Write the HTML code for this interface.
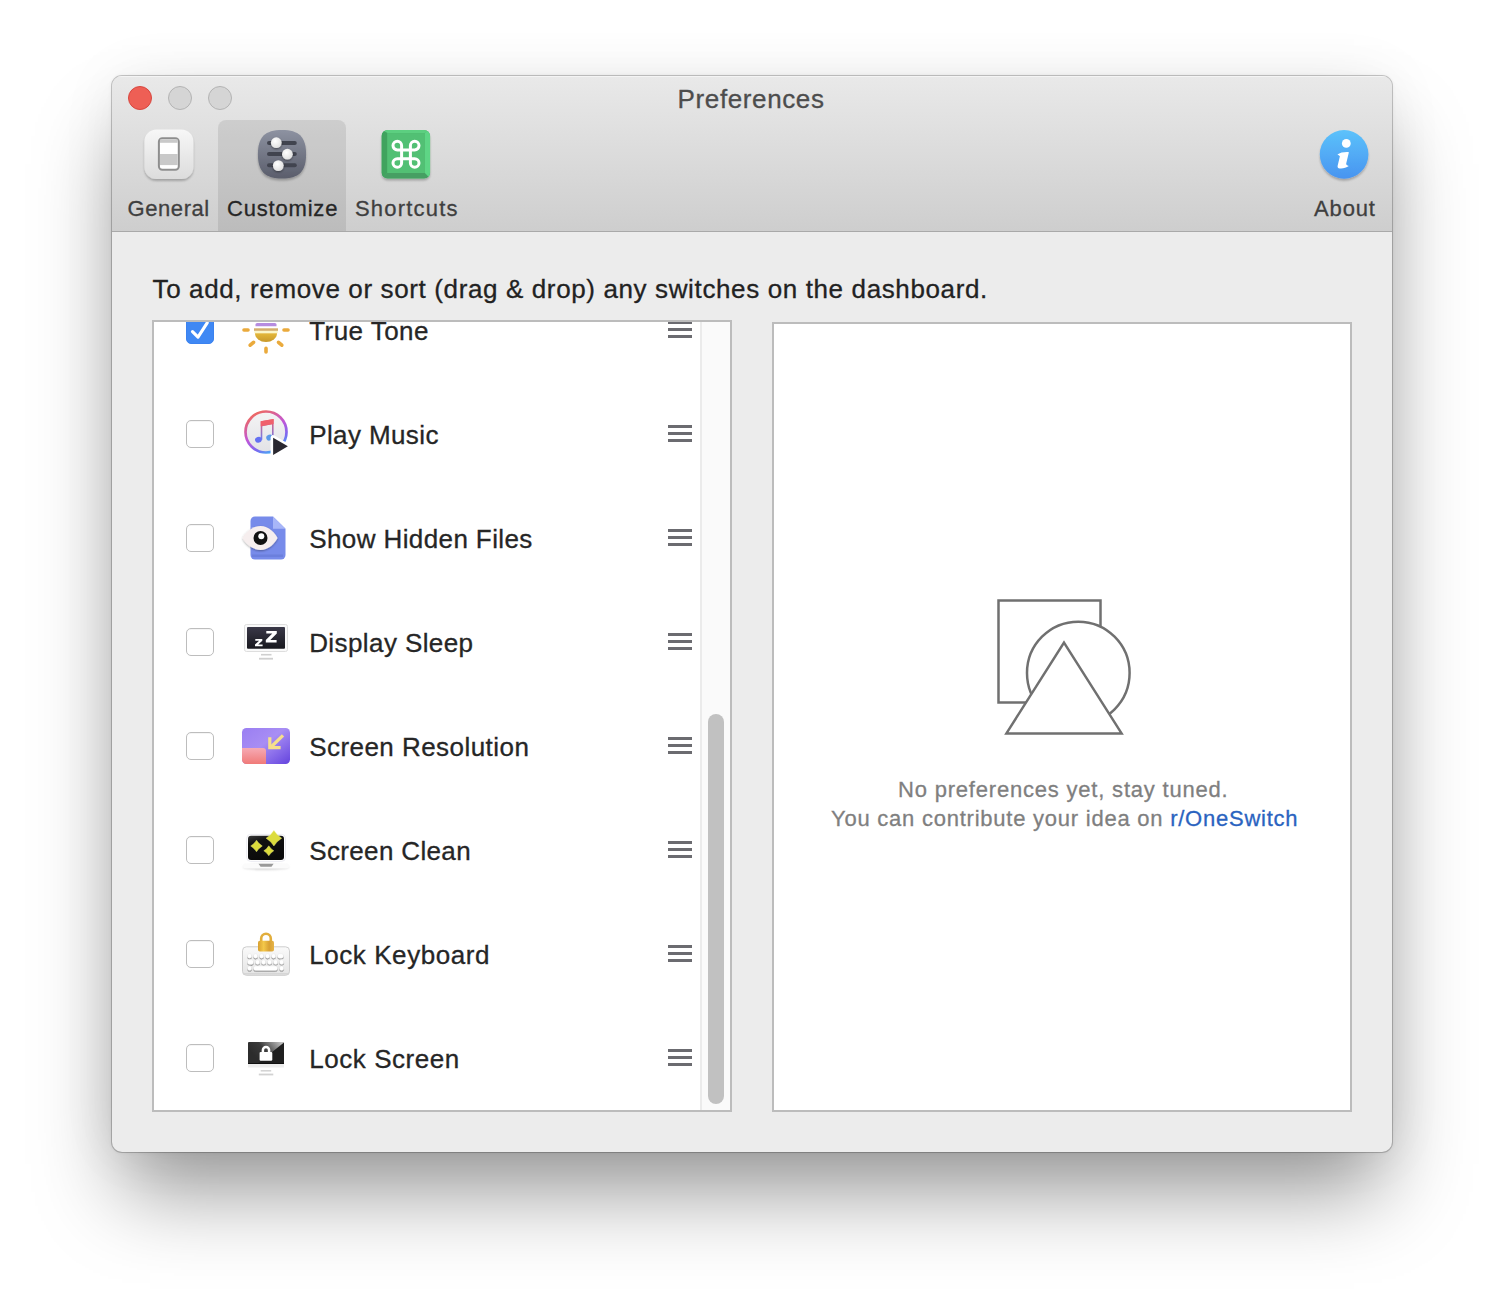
<!DOCTYPE html>
<html><head><meta charset="utf-8">
<style>
*{box-sizing:border-box;margin:0;padding:0}
html,body{width:1504px;height:1300px;background:#fff;overflow:hidden;font-family:"Liberation Sans",sans-serif}
.txt,.tlab,.lab{-webkit-text-stroke:0.3px currentColor}
.abs{position:absolute}
#win{position:absolute;left:112px;top:76px;width:1280px;height:1076px;border-radius:10px;background:#ececec;
 box-shadow:0 0 0 1px rgba(0,0,0,0.2),0 0 4px rgba(0,0,0,0.08),0 0 60px rgba(0,0,0,0.06),0 50px 80px -10px rgba(0,0,0,0.40);overflow:hidden}
#tb{position:absolute;left:0;top:0;width:1280px;height:156px;background:linear-gradient(#e9e9e9,#cecece);border-bottom:1px solid #a9a9a9;box-shadow:inset 0 1px 0 rgba(255,255,255,0.5)}
.tl{position:absolute;width:24px;height:24px;border-radius:50%;top:10px}
.txt{position:absolute;white-space:nowrap}
.tlab{position:absolute;font-size:22px;line-height:22px;color:#3f3f3f;white-space:nowrap}
.row{position:absolute;left:0;width:546px;height:104px}
.cb{position:absolute;left:32px;top:38px;width:28px;height:28px;border-radius:5px;border:1px solid #bdbdbd;background:#fff;box-shadow:inset 0 1px 0 rgba(0,0,0,0.04)}
.lab{position:absolute;left:155.2px;top:0;font-size:26px;line-height:26px;color:#262626;white-space:nowrap}
.ico{position:absolute;left:84px;top:24px;width:56px;height:56px}
.hd{position:absolute;left:514px;top:50px;width:24px;height:3px;background:#6b6b70;box-shadow:0 -7px 0 #6b6b70,0 7px 0 #6b6b70}
</style></head><body>
<div id="win">
 <div id="tb">
  <div class="tl" style="left:16px;background:#ee5f55;border:1px solid #d7473f"></div>
  <div class="tl" style="left:56px;background:#d5d5d5;border:1px solid #b3b3b3"></div>
  <div class="tl" style="left:96px;background:#d5d5d5;border:1px solid #b3b3b3"></div>
  <div class="abs" style="left:106px;top:44px;width:128px;height:111px;background:rgba(0,0,0,0.085);border-radius:8px 8px 0 0"></div>
 </div>
</div>
<!-- toolbar icons -->
<svg class="abs" style="left:120px;top:115px" width="1280" height="80" viewBox="120 115 1280 80">
<defs>
 <linearGradient id="tgen" x1="0" y1="0" x2="0" y2="1"><stop offset="0" stop-color="#f7f7f7"/><stop offset="1" stop-color="#dcdcdc"/></linearGradient>
 <linearGradient id="tcus" x1="0" y1="0" x2="0" y2="1"><stop offset="0" stop-color="#8d92a1"/><stop offset="1" stop-color="#5a5d6b"/></linearGradient>
 <linearGradient id="tabt" x1="0" y1="0" x2="0" y2="1"><stop offset="0" stop-color="#5cc2fb"/><stop offset="1" stop-color="#4894f0"/></linearGradient>
 <radialGradient id="tknob" cx="0.4" cy="0.35" r="0.7"><stop offset="0" stop-color="#ffffff"/><stop offset="1" stop-color="#dedede"/></radialGradient>
 <filter id="tsh" x="-30%" y="-30%" width="160%" height="170%"><feGaussianBlur in="SourceAlpha" stdDeviation="1.3"/><feOffset dy="1.5"/><feComponentTransfer><feFuncA type="linear" slope="0.25"/></feComponentTransfer><feMerge><feMergeNode/><feMergeNode in="SourceGraphic"/></feMerge></filter>
 <filter id="ksh" x="-50%" y="-50%" width="200%" height="200%"><feGaussianBlur in="SourceAlpha" stdDeviation="0.8"/><feOffset dy="0.8"/><feComponentTransfer><feFuncA type="linear" slope="0.45"/></feComponentTransfer><feMerge><feMergeNode/><feMergeNode in="SourceGraphic"/></feMerge></filter>
</defs>
<!-- General -->
<rect x="144.4" y="129.6" width="49" height="49.5" rx="12" fill="url(#tgen)" filter="url(#tsh)"/>
<rect x="158.9" y="138.3" width="19.9" height="31.4" rx="3.5" fill="#fff" stroke="#8e8e8e" stroke-width="2"/>
<rect x="160" y="139.3" width="17.7" height="3.5" fill="#c9c9c9"/>
<rect x="160" y="154" width="17.7" height="11.1" fill="#c9c9c9"/>
<!-- Customize -->
<path d="M282 130.1 C299 130.1 306.1 137 306.1 154.35 C306.1 171.7 299 178.6 282 178.6 C265 178.6 257.9 171.7 257.9 154.35 C257.9 137 265 130.1 282 130.1 Z" fill="url(#tcus)" filter="url(#tsh)"/>
<g stroke="#41444f" stroke-width="4" stroke-linecap="round">
 <line x1="269" y1="142.9" x2="294.8" y2="142.9"/><line x1="269" y1="154" x2="294.8" y2="154"/><line x1="269" y1="165.3" x2="294.8" y2="165.3"/>
</g>
<g fill="url(#tknob)" filter="url(#ksh)">
 <circle cx="276.3" cy="142.7" r="5.4"/><circle cx="287.4" cy="154.2" r="5.4"/><circle cx="278.3" cy="165.6" r="5.4"/>
</g>
<!-- Shortcuts -->
<clipPath id="csc"><rect x="381.6" y="129.9" width="48.5" height="48.7" rx="6"/></clipPath>
<g filter="url(#tsh)">
<rect x="381.6" y="129.9" width="48.5" height="48.7" rx="6" fill="#4db36b"/>
</g>
<g clip-path="url(#csc)">
<path d="M381.6 129.9 H430.1 L424.7 133.1 H387.3 Z" fill="#5ccf80"/>
<path d="M430.1 129.9 V178.6 L424.7 173 V133.1 Z" fill="#5ed585"/>
<path d="M381.6 129.9 L387.3 133.1 V173 L381.6 178.6 Z" fill="#40a35e"/>
<path d="M387.3 173 H424.7 L430.1 178.6 H381.6 Z" fill="#469f63"/>
<rect x="387.3" y="133.1" width="37.4" height="39.9" fill="#52c074"/>
</g>
<path d="M401.60 145.60 A4.3 4.3 0 1 0 397.30 149.90 L414.70 149.90 A4.3 4.3 0 1 0 410.40 145.60 L410.40 163.00 A4.3 4.3 0 1 0 414.70 158.70 L397.30 158.70 A4.3 4.3 0 1 0 401.60 163.00 Z" fill="none" stroke="#fff" stroke-width="3"/>
<!-- About -->
<circle cx="1344.1" cy="154.4" r="24.3" fill="url(#tabt)" filter="url(#tsh)"/>
<circle cx="1346.3" cy="143.4" r="4.4" fill="#fff"/>
<path d="M1337.4 154.6 C1340 152.6 1345 151.8 1348.9 152.2 L1346.2 163.5 C1346 164.8 1347 165.5 1348.8 166 C1346 168.3 1341.5 168.8 1338.6 168.2 C1337.6 167.7 1337.4 166.8 1337.7 165.6 L1339.9 156.3 C1339.2 155.4 1338.3 155 1337.4 154.6 Z" fill="#fff"/>
</svg>
<!-- title -->
<div class="txt" style="left:677.6px;top:86px;font-size:26px;line-height:26px;color:#4d4d4d;letter-spacing:0.61px">Preferences</div>
<!-- toolbar labels -->
<div class="tlab" style="left:127.5px;top:198px;letter-spacing:0.58px">General</div>
<div class="tlab" style="left:227px;top:198px;color:#262626;letter-spacing:0.81px">Customize</div>
<div class="tlab" style="left:355px;top:198px;letter-spacing:1.19px">Shortcuts</div>
<div class="tlab" style="left:1314px;top:198px;letter-spacing:0.87px">About</div>

<!-- description -->
<div class="txt" style="left:152.5px;top:275.7px;font-size:26px;line-height:26px;color:#222;letter-spacing:0.627px">To add, remove or sort (drag &amp; drop) any switches on the dashboard.</div>

<!-- list box -->
<div class="abs" style="left:152px;top:320px;width:580px;height:792px;background:#fff;border:2px solid #bcbcbc"></div>
<div class="abs" id="list" style="left:154px;top:322px;width:576px;height:788px;overflow:hidden">
<div class="row" style="top:-44px"><div class="cb" style="background:#3f88f4;border-color:#3b82ef"><svg width="28" height="28" viewBox="0 0 28 28" style="position:absolute;left:-1px;top:-1px"><path d="M6.5 15.6 L12 21.2 L21.2 6.8" stroke="#fff" stroke-width="3.1" fill="none" stroke-linecap="round" stroke-linejoin="round"/></svg></div><svg class="ico" viewBox="0 0 56 56">
<defs><linearGradient id="gsun" x1="0" y1="0" x2="0" y2="1"><stop offset="0" stop-color="#e4b83a"/><stop offset="1" stop-color="#c8982a"/></linearGradient></defs>
<path d="M17.5 24.2 V22.6 a1.6 1.6 0 0 1 1.6 -1.6 H36.9 a1.6 1.6 0 0 1 1.6 1.6 V24.2 Z" fill="#b68ce0"/>
<rect x="16" y="26.3" width="24" height="2.6" fill="#d4ae6c"/>
<rect x="16.3" y="28.9" width="23.4" height="2.3" fill="#fbf6c8"/>
<path d="M17 31.3 H39 A11 8.8 0 0 1 17 31.3 Z" fill="url(#gsun)"/>
<g stroke="#eaaa3c" stroke-width="3.6" stroke-linecap="round">
<line x1="6" y1="28" x2="10" y2="28"/><line x1="46" y1="28" x2="50" y2="28"/>
<line x1="12.2" y1="43.2" x2="15.5" y2="40.3"/><line x1="40.5" y1="40.3" x2="43.8" y2="43.2"/>
<line x1="28" y1="46.4" x2="28" y2="50"/>
</g></svg><div class="lab" style="top:40px;letter-spacing:0.45px">True Tone</div><div class="hd"></div></div>
<div class="row" style="top:60px"><div class="cb"></div><svg class="ico" viewBox="0 0 56 56">
<defs><linearGradient id="gring" x1="0.15" y1="0.05" x2="0.65" y2="1"><stop offset="0" stop-color="#f06a5c"/><stop offset="0.5" stop-color="#c056d8"/><stop offset="0.8" stop-color="#7a6af0"/><stop offset="1" stop-color="#48aaf4"/></linearGradient>
<linearGradient id="gin" x1="0" y1="0" x2="0" y2="1"><stop offset="0" stop-color="#f4f4f5"/><stop offset="1" stop-color="#e2e2e6"/></linearGradient>
<linearGradient id="gstem" x1="0" y1="0" x2="0" y2="1"><stop offset="0" stop-color="#f0606e"/><stop offset="1" stop-color="#6a7af0"/></linearGradient></defs>
<circle cx="28" cy="26" r="20.5" fill="url(#gin)" stroke="url(#gring)" stroke-width="2.7"/>
<path d="M22.7 15.3 L35.6 13 V31 H34 V18.2 L24.3 20.2 V33.8 H22.7 Z" fill="url(#gstem)"/>
<path d="M22.7 15.3 L35.6 13 V17.9 L22.7 20.2 Z" fill="#f0606c"/>
<ellipse cx="20.4" cy="33.8" rx="3.4" ry="2.9" transform="rotate(-18 20.4 33.8)" fill="#6470f2"/>
<ellipse cx="31.6" cy="31.6" rx="3.4" ry="2.9" transform="rotate(-18 31.6 31.6)" fill="#5c9ae8"/>
<path d="M35.1 31.7 L35.1 48.9 L49.9 40.3 Z" fill="#fff" stroke="#fff" stroke-width="5" stroke-linejoin="round"/><path d="M35.1 31.7 L35.1 48.9 L49.9 40.3 Z" fill="#2a2830"/>
</svg><div class="lab" style="top:40px;letter-spacing:0.389px">Play Music</div><div class="hd"></div></div>
<div class="row" style="top:164px"><div class="cb"></div><svg class="ico" viewBox="0 0 56 56">
<defs><filter id="fsh" x="-30%" y="-30%" width="160%" height="160%"><feGaussianBlur in="SourceAlpha" stdDeviation="1"/><feOffset dy="1" dx="-0.5"/><feComponentTransfer><feFuncA type="linear" slope="0.35"/></feComponentTransfer><feMerge><feMergeNode/><feMergeNode in="SourceGraphic"/></feMerge></filter></defs>
<path d="M17 6.5 H35 L47.5 18.7 V45 a4.5 4.5 0 0 1 -4.5 4.5 H17 a4.5 4.5 0 0 1 -4.5 -4.5 V11 a4.5 4.5 0 0 1 4.5 -4.5 Z" fill="#778bea"/>
<path d="M35 6.5 L47.5 18.7 H35 Z" fill="#a8b6f8"/>
<rect x="14" y="44.5" width="31" height="2.5" fill="#6478d4" opacity="0.6"/>
<path d="M4.6 28 C6.5 23.5, 14 16, 22.5 16 C31 16, 37 23, 39.6 28 C37 33, 31 40, 22.5 40 C14 40, 6.5 32.5, 4.6 28 Z" fill="#f6eeee" filter="url(#fsh)"/>
<circle cx="22.5" cy="28" r="7" fill="#111"/>
<circle cx="23.3" cy="26.3" r="3" fill="#fff"/>
</svg><div class="lab" style="top:40px;letter-spacing:0.4px">Show Hidden Files</div><div class="hd"></div></div>
<div class="row" style="top:268px"><div class="cb"></div><svg class="ico" viewBox="0 0 56 56">
<defs><linearGradient id="gscr" x1="0" y1="0" x2="0" y2="1"><stop offset="0" stop-color="#3a3848"/><stop offset="1" stop-color="#18181e"/></linearGradient></defs>
<rect x="6.5" y="10.5" width="43" height="27" rx="2" fill="#f9f9f9" stroke="#dedede" stroke-width="1"/>
<rect x="9" y="13" width="38" height="21.7" rx="1" fill="url(#gscr)"/>
<path d="M17.3 25 H24.3 V26.8 L20.2 30.6 H24.6 V32.3 H17 V30.5 L21.1 26.7 H17.3 Z" fill="#fff"/>
<path d="M28.3 17 H38.8 V19.5 L32.3 26 H38.6 V28.4 H27.8 V26 L34.3 19.5 H28.3 Z" fill="#fff"/>
<line x1="23" y1="40.7" x2="33.5" y2="40.7" stroke="#cfcfcf" stroke-width="1.6"/>
<line x1="21" y1="44.7" x2="35" y2="44.7" stroke="#cfcfcf" stroke-width="1.8"/>
</svg><div class="lab" style="top:40px;letter-spacing:0.408px">Display Sleep</div><div class="hd"></div></div>
<div class="row" style="top:372px"><div class="cb"></div><svg class="ico" viewBox="0 0 56 56">
<defs><linearGradient id="gres" x1="0" y1="0" x2="1" y2="1"><stop offset="0" stop-color="#9a7ef2"/><stop offset="0.45" stop-color="#a88ef4"/><stop offset="1" stop-color="#6444de"/></linearGradient>
<linearGradient id="gpink" x1="0" y1="0" x2="0" y2="1"><stop offset="0" stop-color="#f6aab4"/><stop offset="1" stop-color="#f07a78"/></linearGradient></defs>
<rect x="4" y="10" width="48" height="36" rx="4.5" fill="url(#gres)"/>
<path d="M4 30 H25 a3 3 0 0 1 3 3 V46 H8.5 a4.5 4.5 0 0 1 -4.5 -4.5 Z" fill="url(#gpink)"/>
<g stroke="#f6df8c" stroke-width="3.2" fill="none"><line x1="45" y1="17.3" x2="33.5" y2="28.5"/><path d="M31.8 19.2 V29.6 H42.6"/></g>
</svg><div class="lab" style="top:40px;letter-spacing:0.45px">Screen Resolution</div><div class="hd"></div></div>
<div class="row" style="top:476px"><div class="cb"></div><svg class="ico" viewBox="0 0 56 56">
<defs><linearGradient id="gcl" x1="0" y1="0" x2="0.4" y2="1"><stop offset="0" stop-color="#3a3a3a"/><stop offset="0.3" stop-color="#111"/><stop offset="1" stop-color="#0a0a0a"/></linearGradient>
<filter id="fbl" x="-20%" y="-50%" width="140%" height="200%"><feGaussianBlur stdDeviation="1.2"/></filter></defs>
<ellipse cx="28" cy="45" rx="23" ry="3" fill="#d8d8d8" filter="url(#fbl)"/>
<rect x="5" y="41.5" width="46" height="5" rx="2.5" fill="#fbfbfb"/>
<path d="M20.5 41.7 H35.6 L33.5 44.7 H22.6 Z" fill="#9a9a9a"/>
<rect x="8.7" y="12.4" width="38.8" height="27" rx="4" fill="#fff" stroke="#e6e6ee" stroke-width="0.8"/>
<rect x="10" y="13.7" width="36" height="24.3" rx="3" fill="url(#gcl)"/>
<g fill="#dcdc3c" stroke="#f0f080" stroke-width="0.4">
<path d="M18.5 18.2 Q20.70 21.80 24.3 24 Q20.70 26.20 18.5 29.8 Q16.30 26.20 12.7 24 Q16.30 21.80 18.5 18.2 Z"/>
<path d="M30.8 23.8 Q32.70 26.90 35.8 28.8 Q32.70 30.70 30.8 33.8 Q28.90 30.70 25.8 28.8 Q28.90 26.90 30.8 23.8 Z"/>
<path d="M35.9 8.399999999999999 Q38.86 13.24 43.699999999999996 16.2 Q38.86 19.16 35.9 24.0 Q32.94 19.16 28.099999999999998 16.2 Q32.94 13.24 35.9 8.399999999999999 Z"/>
</g></svg><div class="lab" style="top:40px;letter-spacing:0.355px">Screen Clean</div><div class="hd"></div></div>
<div class="row" style="top:580px"><div class="cb"></div><svg class="ico" viewBox="0 0 56 56">
<defs><linearGradient id="gkb" x1="0" y1="0" x2="0" y2="1"><stop offset="0" stop-color="#fafafa"/><stop offset="1" stop-color="#e4e4e4"/></linearGradient>
<linearGradient id="glk" x1="0" y1="0" x2="1" y2="0"><stop offset="0" stop-color="#d8a030"/><stop offset="0.35" stop-color="#f4c84a"/><stop offset="0.7" stop-color="#d8a034"/><stop offset="1" stop-color="#e6b448"/></linearGradient></defs>
<rect x="4.5" y="20.8" width="47" height="28.5" rx="4" fill="url(#gkb)" stroke="#cdcdcd" stroke-width="1"/><rect x="5.5" y="47" width="45" height="1.6" rx="0.8" fill="#d6d6d6"/>
<filter id="fkey" x="-30%" y="-30%" width="160%" height="180%"><feGaussianBlur in="SourceAlpha" stdDeviation="0.35"/><feOffset dy="0.9"/><feComponentTransfer><feFuncA type="linear" slope="0.55"/></feComponentTransfer><feMerge><feMergeNode/><feMergeNode in="SourceGraphic"/></feMerge></filter><g fill="#fff" stroke="#dadada" stroke-width="0.3" filter="url(#fkey)">
<rect x="9.5" y="27.7" width="4.2" height="4.6" rx="2"/><rect x="15.5" y="27.7" width="4.2" height="4.6" rx="2"/><rect x="21.5" y="27.7" width="4.2" height="4.6" rx="2"/><rect x="27.5" y="27.7" width="4.2" height="4.6" rx="2"/><rect x="33.5" y="27.7" width="4.2" height="4.6" rx="2"/><rect x="39.5" y="27.7" width="6" height="4.6" rx="2"/>
<rect x="9.5" y="33.8" width="6" height="4.6" rx="2"/><rect x="17.5" y="33.8" width="4.2" height="4.6" rx="2"/><rect x="23.5" y="33.8" width="4.2" height="4.6" rx="2"/><rect x="29.5" y="33.8" width="4.2" height="4.6" rx="2"/><rect x="35.5" y="33.8" width="4.2" height="4.6" rx="2"/><rect x="41.5" y="33.8" width="4.2" height="4.6" rx="2"/>
<rect x="9.5" y="40" width="4.2" height="4.6" rx="2"/><rect x="15.5" y="40" width="24" height="4.6" rx="2"/><rect x="41.5" y="40" width="4.2" height="4.6" rx="2"/>
</g>
<path d="M23.2 16 V12.5 a4.8 4.8 0 0 1 9.6 0 V16" fill="none" stroke="#e2ae3c" stroke-width="2.6"/>
<rect x="20" y="14.7" width="16" height="10.8" rx="1.8" fill="url(#glk)"/>
</svg><div class="lab" style="top:40px;letter-spacing:0.575px">Lock Keyboard</div><div class="hd"></div></div>
<div class="row" style="top:684px"><div class="cb"></div><svg class="ico" viewBox="0 0 56 56">
<defs><linearGradient id="gls" gradientUnits="userSpaceOnUse" x1="42" y1="11" x2="20" y2="30"><stop offset="0" stop-color="#c0c0c0"/><stop offset="0.6" stop-color="#3a3a3a"/><stop offset="1" stop-color="#2c2c2c"/></linearGradient></defs>
<rect x="10" y="12" width="36" height="22" rx="1" fill="url(#gls)"/>
<path d="M46 12.6 V34 H19.2 Z" fill="#1f1f1f"/>
<rect x="10" y="33" width="36" height="1" fill="#111"/>
<rect x="10" y="34" width="36" height="3.5" fill="#ededed"/>
<path d="M24.9 22.5 V20 a3.1 3.1 0 0 1 6.2 0 V22.5" fill="none" stroke="#fff" stroke-width="2.5"/>
<rect x="21.6" y="21.9" width="12.7" height="8.9" rx="1.2" fill="#fff"/>
<line x1="22.7" y1="40.8" x2="33.2" y2="40.8" stroke="#d2d2d2" stroke-width="1.5"/>
<line x1="20.8" y1="44.5" x2="35.3" y2="44.5" stroke="#d2d2d2" stroke-width="1.8"/>
</svg><div class="lab" style="top:40px;letter-spacing:0.56px">Lock Screen</div><div class="hd"></div></div>
 <div class="abs" style="left:546px;top:0;width:30px;height:788px;background:#fafafa;border-left:2px solid #ebebeb"></div>
 <div class="abs" style="left:554px;top:392px;width:16px;height:390px;border-radius:8px;background:#c1c1c1"></div>
</div>

<!-- right panel -->
<div class="abs" style="left:772px;top:322px;width:580px;height:790px;background:#fff;border:2px solid #bcbcbc"></div>
<svg class="abs" style="left:980px;top:585px" width="160" height="160" viewBox="980 585 160 160">
 <rect x="998.5" y="600.5" width="102" height="102" fill="none" stroke="#707070" stroke-width="2.5"/>
 <circle cx="1078.3" cy="673" r="51.3" fill="#fff" stroke="#707070" stroke-width="2.5"/>
 <path d="M1064 642.6 L1121.6 733.4 L1006.4 733.4 Z" fill="#fff" stroke="#707070" stroke-width="2.5" stroke-linejoin="miter"/>
</svg>
<div class="txt" style="left:898px;top:779.4px;font-size:22px;line-height:22px;color:#7f7f7f;letter-spacing:0.8px">No preferences yet, stay tuned.</div>
<div class="txt" style="left:831px;top:807.5px;font-size:22px;line-height:22px;color:#7f7f7f;letter-spacing:0.762px">You can contribute your idea on <span style="color:#2a63c0">r/OneSwitch</span></div>
</body></html>
